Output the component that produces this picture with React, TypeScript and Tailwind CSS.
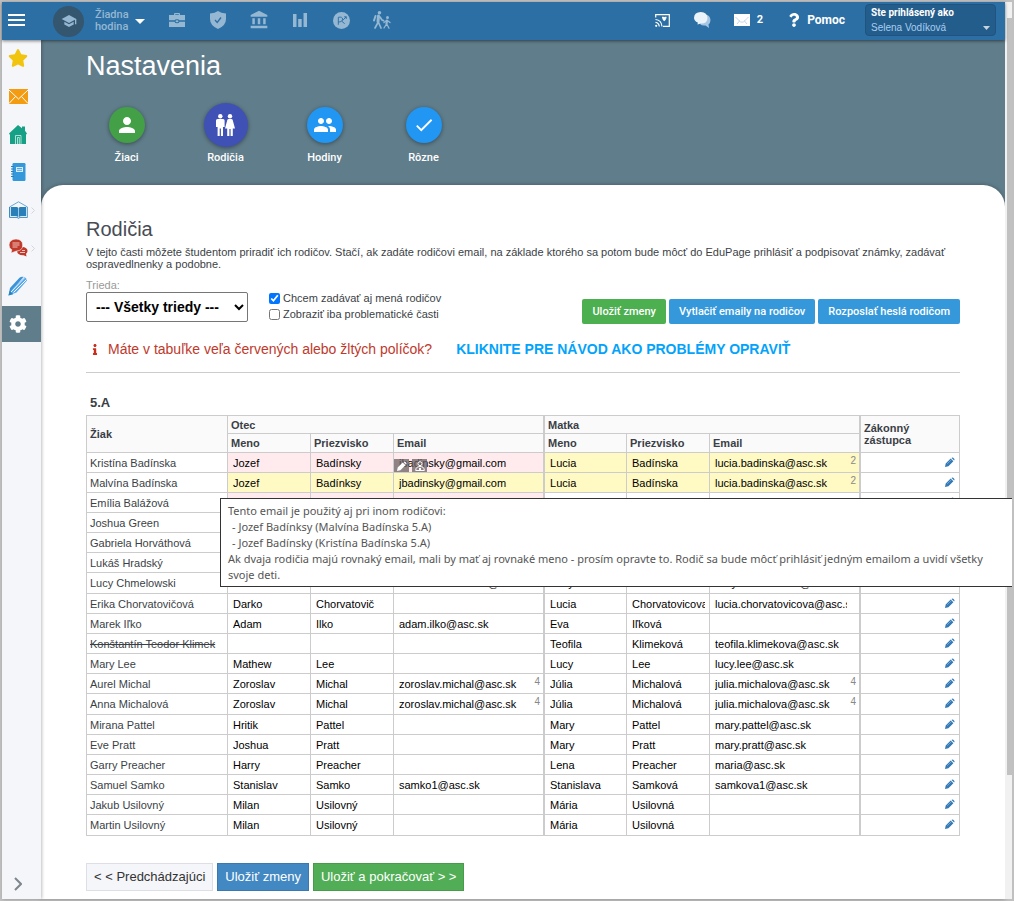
import React from "react";
import { MdPerson, MdPeople, MdCheck, MdSchool, MdAccountBalance } from "react-icons/md";
import { FaStar, FaQuestion, FaInfo, FaCog } from "react-icons/fa";

type Person = { first?: string; last?: string; email?: string; count?: number; tone?: "pink" | "yellow" };
type Row = { student: string; struck?: boolean; father: Person; mother: Person };

const rows: Row[] = [
  {
    student: "Kristína Badínska",
    father: { first: "Jozef", last: "Badínsky", email: "jbadinsky@gmail.com", tone: "pink" },
    mother: { first: "Lucia", last: "Badínska", email: "lucia.badinska@asc.sk", count: 2, tone: "yellow" },
  },
  {
    student: "Malvína Badínska",
    father: { first: "Jozef", last: "Badínksy", email: "jbadinsky@gmail.com", tone: "yellow" },
    mother: { first: "Lucia", last: "Badínska", email: "lucia.badinska@asc.sk", count: 2, tone: "yellow" },
  },
  { student: "Emília Balážová", father: { tone: "pink" }, mother: {} },
  { student: "Joshua Green", father: {}, mother: {} },
  { student: "Gabriela Horváthová", father: {}, mother: {} },
  { student: "Lukáš Hradský", father: {}, mother: {} },
  {
    student: "Lucy Chmelowski",
    father: { first: "Robert", last: "Chmelowski", email: "robert.chmelowski@asc.sk" },
    mother: { first: "Kelly", last: "Chmelowska", email: "kelly.chmelowska@asc.sk" },
  },
  {
    student: "Erika Chorvatovičová",
    father: { first: "Darko", last: "Chorvatovič" },
    mother: { first: "Lucia", last: "Chorvatovicova", email: "lucia.chorvatovicova@asc.sk" },
  },
  { student: "Marek Iľko", father: { first: "Adam", last: "Ilko", email: "adam.ilko@asc.sk" }, mother: { first: "Eva", last: "Iľková" } },
  { student: "Konštantín Teodor Klimek", struck: true, father: {}, mother: { first: "Teofila", last: "Klimeková", email: "teofila.klimekova@asc.sk" } },
  { student: "Mary Lee", father: { first: "Mathew", last: "Lee" }, mother: { first: "Lucy", last: "Lee", email: "lucy.lee@asc.sk" } },
  {
    student: "Aurel Michal",
    father: { first: "Zoroslav", last: "Michal", email: "zoroslav.michal@asc.sk", count: 4 },
    mother: { first: "Júlia", last: "Michalová", email: "julia.michalova@asc.sk", count: 4 },
  },
  {
    student: "Anna Michalová",
    father: { first: "Zoroslav", last: "Michal", email: "zoroslav.michal@asc.sk", count: 4 },
    mother: { first: "Júlia", last: "Michalová", email: "julia.michalova@asc.sk", count: 4 },
  },
  { student: "Mirana Pattel", father: { first: "Hritik", last: "Pattel" }, mother: { first: "Mary", last: "Pattel", email: "mary.pattel@asc.sk" } },
  { student: "Eve Pratt", father: { first: "Joshua", last: "Pratt" }, mother: { first: "Mary", last: "Pratt", email: "mary.pratt@asc.sk" } },
  { student: "Garry Preacher", father: { first: "Harry", last: "Preacher" }, mother: { first: "Lena", last: "Preacher", email: "maria@asc.sk" } },
  {
    student: "Samuel Samko",
    father: { first: "Stanislav", last: "Samko", email: "samko1@asc.sk" },
    mother: { first: "Stanislava", last: "Samková", email: "samkova1@asc.sk" },
  },
  { student: "Jakub Usilovný", father: { first: "Milan", last: "Usilovný" }, mother: { first: "Mária", last: "Usilovná" } },
  { student: "Martin Usilovný", father: { first: "Milan", last: "Usilovný" }, mother: { first: "Mária", last: "Usilovná" } },
];

const tones = { pink: "bg-[#ffebee]", yellow: "bg-[#fff9c4]", none: "bg-white" };

/* ---------- top bar icons ---------- */

function Briefcase() {
  return (
    <svg viewBox="0 0 16 14" className="h-[14px] w-4" fill="currentColor">
      <path d="M5 2V1q0-1 1-1h4q1 0 1 1v1h-1.2V1.2H6.200V2zM0 2h16v5.300h-5.500Q10 6.300 8 6.300T5.500 7.300H0zM0 8.700h5.500Q6 10.200 8 10.200T10.500 8.700H16V14H0z" />
      <ellipse cx="8" cy="8.200" rx="1.500" ry="1" />
    </svg>
  );
}

function ShieldCheck() {
  return (
    <svg viewBox="0 0 16 18" className="h-[18px] w-4">
      <path d="M8 0Q11 2.200 16 2.600V8q0 6.500-8 10Q0 14.500 0 8V2.600Q5 2.200 8 0z" fill="currentColor" />
      <path d="M5 9l2.200 2.500L11 6.500" fill="none" stroke="#2b6fa5" strokeWidth="1.300" />
    </svg>
  );
}

function Bars() {
  return (
    <svg viewBox="0 0 14 14" className="h-[14px] w-[14px]" fill="currentColor">
      <path d="M0 1h3.500v13H0zM5.200 6h3.500v8H5.200zM10.500 0H14v14h-3.500z" />
    </svg>
  );
}

function ChartBadge() {
  return (
    <svg viewBox="0 0 16 16" className="h-[17px] w-[17px]">
      <circle cx="8" cy="8" r="8" fill="currentColor" />
      <path d="M5 12V5q4-.8 4 1.700T5 9.500M8 8.500l3 2.500M9 8l3.500-3.500M10.500 4.500h2v2" fill="none" stroke="#2b6fa5" strokeWidth=".9" />
    </svg>
  );
}

function Walkers() {
  return (
    <svg viewBox="0 0 18 18" className="h-[18px] w-[18px]">
      <circle cx="6.500" cy="1.800" r="1.800" fill="currentColor" />
      <circle cx="14.500" cy="6.500" r="1.500" fill="currentColor" />
      <g fill="none" stroke="currentColor" strokeLinecap="round" strokeLinejoin="round">
        <path d="M5.500 5L5 10.500" strokeWidth="3" />
        <path d="M5.500 11.500L8 17M5 11.500L2 17M7 6l2 3 1.500 .6" strokeWidth="1.700" />
        <path d="M2.500 5L1 9.500" strokeWidth="2" />
        <path d="M14 9.500l-.5 3" strokeWidth="2.200" />
        <path d="M14 13.500l2 3.700M13.500 13l-2.500 4M13.500 9.500L11 11.500M15 10l2 1.500" strokeWidth="1.300" />
      </g>
    </svg>
  );
}

function CastScreen() {
  return (
    <svg viewBox="0 0 15 13" className="h-[13px] w-[15px]" fill="none" stroke="#fff">
      <path d="M.7 3.500V.7h13.600v11.600H8" strokeWidth="1.200" />
      <path d="M.5 5.500q6 .5 6.500 7M.5 8.300q3.400 .4 3.800 4.200" strokeWidth="1.200" />
      <circle cx="1.200" cy="11.800" r="1.100" fill="#fff" stroke="none" />
      <path d="M7 2.800h1.500q.7 .7 1.400 0h1.600v1.700h-.7v1.200L9.200 7.200 7.700 5.700V4.500H7z" fill="#fff" stroke="none" />
    </svg>
  );
}

function Bubbles() {
  return (
    <svg viewBox="0 0 17 16" className="h-4 w-[17px]">
      <path d="M9 3q7-1 7.500 5Q16.500 11 14.500 12.500L15 16l-3.500-2.500Q8 14 6 12z" fill="#a5c5e2" />
      <path d="M6.800 0Q13.500 .3 13.500 6T6.800 11.500L3.500 12.500 3.800 10.500Q0 9 0 5.700 .3 .3 6.800 0z" fill="#eaf2fa" />
    </svg>
  );
}

function MailWhite() {
  return (
    <svg viewBox="0 0 16 12" className="h-3 w-4">
      <path d="M0 0h16v12H0z" fill="#fff" />
      <path d="M1.500 3l4 4L3 10M14.500 3l-4 4 2.500 3M5 6.500q3 3.500 6 0" fill="none" stroke="#b4cde4" strokeWidth=".8" />
    </svg>
  );
}

function Couple() {
  return (
    <svg viewBox="0 0 19 22" className="h-[22px] w-[19px]" fill="currentColor">
      <circle cx="4.300" cy="2.200" r="2.200" />
      <circle cx="14" cy="2.200" r="2.200" />
      <path d="M1.500 5h5.600q1.500 0 1.500 1.500v6.500H7v9H4.900v-7.500H3.700V22H1.600v-9H0V6.500Q0 5 1.500 5z" />
      <path d="M12.600 5h2.800q1 0 1.300 1L19 14.500h-2.200V22h-2.200v-7h-1.200v7h-2.200v-7.500H9L11.300 6q.3-1 1.300-1z" />
    </svg>
  );
}

/* ---------- side bar icons ---------- */

function MailOrange() {
  return (
    <svg viewBox="0 0 19 15" className="h-[15px] w-[19px]">
      <path d="M0 0h19v15H0z" fill="#f39c12" />
      <path d="M0 1l9.500 9L19 1M0 14.500L6.500 7.500M19 14.500L12.500 7.500" fill="none" stroke="#fff" strokeWidth="1" />
    </svg>
  );
}

function House() {
  return (
    <svg viewBox="0 0 18 19" className="h-[19px] w-[18px]">
      <path d="M9 0l4 3.300V1.500h3v4.200L18 8.500l-.8 1H17V19H1V9.500H.5L0 8.500z" fill="#16a085" />
      <path d="M6.500 19v-8.500h5.500V19M8.500 19v-6.500h1.800V19" fill="none" stroke="#d3f0e9" strokeWidth=".8" />
    </svg>
  );
}

function Notebook() {
  return (
    <svg viewBox="0 0 15 18" className="h-[18px] w-[15px]">
      <rect x="1.500" width="13" height="18" rx="1.200" fill="#3498db" />
      <path d="M0 3.500h3M0 6h3M0 8.500h3M0 11h3M0 13.500h3" stroke="#2a80bd" strokeWidth="1" />
      <path d="M5 4h7v5H5z" fill="#d9ecf9" />
      <path d="M6 5.500h5M6 7.300h5" stroke="#3498db" strokeWidth=".8" />
    </svg>
  );
}

function OpenBook() {
  return (
    <svg viewBox="0 0 19 18" className="h-[18px] w-[19px]">
      <path d="M.5 6L9.500 .8 18.500 6v10.300" fill="none" stroke="#5b9fd0" strokeWidth=".9" />
      <path d="M1.800 6h6.200l1.200 .8v9.500Q8 15 6.500 15H1.800zM17.200 6H11l-1.200 .8v9.500Q11 15 12.500 15h4.700z" fill="#2980b9" />
      <path d="M.5 6v10.400h7.500l1.500 .9 1.500-.9h7.500" fill="none" stroke="#2980b9" strokeWidth=".9" />
    </svg>
  );
}

function RedBubbles() {
  return (
    <svg viewBox="0 0 19 18" className="h-[18px] w-[19px]">
      <path d="M14 8q4.500 .8 4.500 4 0 1.700-1.500 2.800l.5 2.700-3-1.300Q9 16.500 8 12.500z" fill="#c0392b" />
      <path d="M7 0q6.500 .3 6.700 6T7 12.200L2 14l.8-3.200Q0 9.300 0 6 .3 .3 7 0z" fill="#c0392b" stroke="#f5f6f9" strokeWidth=".6" />
      <path d="M3.500 4h7M3.500 6h7M3.500 8h5M11 13.500h5M13 11.500h3" stroke="#f5d5d1" strokeWidth=".9" />
    </svg>
  );
}

function Pens() {
  return (
    <svg viewBox="0 0 20 20" className="h-5 w-5">
      <path d="M.5 19.500L2 12 11.500 1.800Q13 .3 15.500 .8L5 13.500z" fill="#3a93d8" />
      <path d="M.5 19.500L5.500 11.800 16 1.300Q18.500 1.500 19 4.500L8.500 16.500z" fill="#5aaaea" />
      <path d="M3 16L16.500 1.800M5.500 16.500L18.500 3.500" stroke="#f5f6f9" strokeWidth="1" />
      <path d="M.5 19.500l1.200-4.500 3.500 3.200z" fill="#2a82c0" />
    </svg>
  );
}

function Chevron({ className }: { className: string }) {
  return (
    <svg viewBox="0 0 8 14" className={className} fill="none" stroke="currentColor" strokeWidth="2">
      <path d="M1 1l6 6-6 6" />
    </svg>
  );
}

/* ---------- table icons ---------- */

function Pencil() {
  return (
    <svg viewBox="0 0 10 10" className="h-[10px] w-[10px]" fill="currentColor">
      <path d="M0 10l.7-3.400L5.700 1.600 8.400 4.300 3.400 9.300zM6.500 .9q.8-.9 1.700-.1l1 1q.8 .9-.1 1.700z" />
      <path d="M2.200 6.800l4-4" stroke="#fff" strokeWidth=".5" opacity=".6" />
    </svg>
  );
}

function AccountLock() {
  return (
    <svg viewBox="0 0 10 10" className="h-[10px] w-[10px]" fill="none" stroke="currentColor">
      <circle cx="5" cy="2.700" r="2" />
      <path d="M.7 9.500q0-4 4.300-4t4.300 4z" />
      <path d="M4 7h2v2H4z" fill="currentColor" stroke="none" />
    </svg>
  );
}

const sideItems = [
  { name: "Obľúbené", icon: <FaStar className="h-5 w-5 text-[#f1c40f]" /> },
  { name: "Správy", icon: <MailOrange /> },
  { name: "Domov", icon: <House /> },
  { name: "Zápisník", icon: <Notebook /> },
  { name: "Vyučovanie", icon: <OpenBook />, more: true },
  { name: "Komunikácia", icon: <RedBubbles />, more: true },
  { name: "Písanie", icon: <Pens /> },
  { name: "Nastavenia", icon: <FaCog className="h-[18px] w-[18px] text-white" />, active: true },
];

const topIcons = [
  { name: "Agenda", icon: <Briefcase /> },
  { name: "Ochrana", icon: <ShieldCheck /> },
  { name: "Škola", icon: <MdAccountBalance className="h-5 w-5" /> },
  { name: "Štatistika", icon: <Bars /> },
  { name: "Výsledky", icon: <ChartBadge /> },
  { name: "Výlety", icon: <Walkers /> },
];

const tabs = [
  { name: "Žiaci", icon: <MdPerson className="h-6 w-6" />, look: "h-9 w-9 bg-[#43a047]" },
  { name: "Rodičia", icon: <Couple />, look: "h-11 w-11 bg-[#3f51b5]" },
  { name: "Hodiny", icon: <MdPeople className="h-6 w-6" />, look: "h-9 w-9 bg-[#2196f3]" },
  { name: "Rôzne", icon: <MdCheck className="h-[22px] w-[22px]" />, look: "h-9 w-9 bg-[#2196f3]" },
];

function TopBar() {
  return (
    <header className="relative z-10 flex h-[38px] shrink-0 items-center bg-[#2b6fa5] pb-[2px] font-['Roboto',sans-serif] text-white shadow-[0_1px_3px_rgba(0,0,0,0.5)]">
      <button aria-label="Menu" className="ml-[6px] flex w-[17px] flex-col gap-[3px]">
        <span className="h-[2px] w-full bg-white" />
        <span className="h-[2px] w-full bg-white" />
        <span className="h-[2px] w-full bg-white" />
      </button>
      <button className="mt-[2px] ml-7 flex items-center text-left text-[11px] leading-3 font-medium text-[#95b7d2]">
        <span className="flex h-[31px] w-[31px] items-center justify-center rounded-full bg-[#34566f]">
          <MdSchool className="h-4 w-4" />
        </span>
        <span className="ml-[11px] w-[40px]">Žiadna hodina</span>
        <svg viewBox="0 0 10 5" className="h-[5px] w-[10px]" fill="#fff">
          <path d="M0 0h10L5 5z" />
        </svg>
      </button>
      <nav className="ml-[22px] flex gap-[21px] text-[#95b7d2]">
        {topIcons.map((i) => (
          <button key={i.name} aria-label={i.name} className="flex h-5 w-5 items-center justify-center">
            {i.icon}
          </button>
        ))}
      </nav>
      <div className="ml-auto flex items-center text-[11px] font-bold">
        <button aria-label="Premietať"><CastScreen /></button>
        <button aria-label="Chat" className="ml-6"><Bubbles /></button>
        <button aria-label="Správy: 2" className="ml-[23px] flex items-center gap-[7px]">
          <MailWhite />
          <span>2</span>
        </button>
        <button className="ml-6 flex items-center gap-[6px]">
          <FaQuestion className="h-[14px] w-[14px]" />
          <span className="text-xs">Pomoc</span>
        </button>
        <button className="mr-[9px] ml-5 flex h-8 w-[131px] flex-col justify-center rounded-sm border border-[#1f5380] bg-[#235d8c] px-[5px] text-left text-[10px] leading-[15px]">
          <span>Ste prihlásený ako</span>
          <span className="flex w-full items-center justify-between font-['Liberation_Sans',sans-serif] font-normal text-[#a9cdf0]">
            Selena Vodíková
            <svg viewBox="0 0 7 4" className="h-1 w-[7px]" fill="#c9d3db">
              <path d="M0 0h7L3.500 4z" />
            </svg>
          </span>
        </button>
      </div>
    </header>
  );
}

function SideBar() {
  return (
    <aside className="relative z-[5] flex w-[39px] shrink-0 flex-col bg-[#f5f6f9] shadow-[1px_0_3px_rgba(0,0,0,0.25)]">
      <nav className="flex flex-col gap-[2px]">
        {sideItems.map((i) => (
          <a
            key={i.name}
            href="#"
            aria-label={i.name}
            className={i.active ? "relative flex h-9 items-center justify-center bg-[#607d8b] pr-[7px]" : "relative flex h-9 items-center justify-center pr-[7px]"}
          >
            {i.icon}
            {i.more && <Chevron className="absolute right-[6px] h-[7px] w-1 text-[#d5d6da]" />}
          </a>
        ))}
      </nav>
      <button aria-label="Rozbaliť" className="mt-auto mb-2 flex justify-center pr-[7px] text-[#7c868c]">
        <Chevron className="h-[14px] w-2" />
      </button>
    </aside>
  );
}

function NameCell({ value, tone, label }: { value?: string; tone: string; label: string }) {
  return (
    <td className={`border-r border-b border-[#ccc] p-0 ${tone}`}>
      <input aria-label={label} defaultValue={value} className="block h-[19px] w-full border-r-4 border-transparent bg-transparent pl-[5px] text-black outline-none" />
    </td>
  );
}

function EmailCell({ person, tone, label, tools }: { person: Person; tone: string; label: string; tools?: boolean }) {
  return (
    <td className={`relative border-r-2 border-b border-b-[#ccc] border-r-[#ccc] p-0 ${tone}`}>
      <input aria-label={label} defaultValue={person.email} className="block h-[19px] w-full border-r-[12px] border-transparent bg-transparent pl-[5px] text-black outline-none" />
      {person.count && <span className="absolute top-[2px] right-[3px] text-[10px] leading-3 text-[#888]">{person.count}</span>}
      {tools && (
        <span className="absolute bottom-0 left-0 flex gap-[3px] text-white">
          <button aria-label="Upraviť email" className="flex h-[13px] w-[15px] items-center justify-center bg-[#6b6063]/75">
            <Pencil />
          </button>
          <button aria-label="Konto" className="flex h-[13px] w-[15px] items-center justify-center bg-[#6b6063]/75">
            <AccountLock />
          </button>
        </span>
      )}
    </td>
  );
}

function ParentCells({ person, who, tools }: { person: Person; who: string; tools?: boolean }) {
  const tone = tones[person.tone ?? "none"];
  return (
    <>
      <NameCell value={person.first} tone={tone} label={`${who} – meno`} />
      <NameCell value={person.last} tone={tone} label={`${who} – priezvisko`} />
      <EmailCell person={person} tone={tone} label={`${who} – email`} tools={tools} />
    </>
  );
}

function ParentsTable() {
  const th = "border-r border-b border-[#ccc] px-[3px] py-0";
  const thEdge = "border-r-2 border-b border-[#ccc] px-[3px] py-0";
  return (
    <table className="w-full table-fixed border-separate border-spacing-0 border-t border-l border-[#ccc] text-[11px] leading-3 text-[#3b3f46]">
      <colgroup>
        <col className="w-[141px]" />
        <col className="w-[83px]" />
        <col className="w-[83px]" />
        <col className="w-[151px]" />
        <col className="w-[82px]" />
        <col className="w-[83px]" />
        <col className="w-[151px]" />
        <col />
      </colgroup>
      <thead className="bg-[#fafafa] text-left">
        <tr className="h-[18px]">
          <th rowSpan={2} className={th}>Žiak</th>
          <th colSpan={3} className={thEdge}>Otec</th>
          <th colSpan={3} className={thEdge}>Matka</th>
          <th rowSpan={2} className={th}>Zákonný<br />zástupca</th>
        </tr>
        <tr className="h-[19px]">
          <th className={th}>Meno</th>
          <th className={th}>Priezvisko</th>
          <th className={thEdge}>Email</th>
          <th className={th}>Meno</th>
          <th className={th}>Priezvisko</th>
          <th className={thEdge}>Email</th>
        </tr>
      </thead>
      <tbody>
        {rows.map((r, i) => (
          <tr key={r.student} className="h-5 align-top nth-[6n+7]:h-[21px]">
            <td className="border-r border-b border-[#ccc] px-[3px] pt-1 pb-0 whitespace-nowrap">
              <span className={r.struck ? "line-through" : ""}>{r.student}</span>
            </td>
            <ParentCells person={r.father} who={`${r.student}, otec`} tools={i === 0} />
            <ParentCells person={r.mother} who={`${r.student}, matka`} />
            <td className="border-r border-b border-[#ccc] pt-1 pr-1 pb-0 pl-0">
              <button aria-label={`Upraviť zástupcu – ${r.student}`} className="ml-auto block text-[#337ab7]">
                <Pencil />
              </button>
            </td>
          </tr>
        ))}
      </tbody>
    </table>
  );
}

function Panel() {
  const action = "h-[25px] rounded-xs px-[10px] pt-px font-['Roboto',sans-serif] text-[11px] font-medium text-white";
  return (
    <section className="flex-1 rounded-t-[22px] bg-white px-[45px] pt-8 text-[#3b3f46] shadow-[0_0_4px_rgba(0,0,0,0.3)]">
      <h2 className="text-xl leading-6 text-[#474c55]">Rodičia</h2>
      <p className="mt-[5px] text-[11px] leading-3">
        V tejto časti môžete študentom priradiť ich rodičov. Stačí, ak zadáte rodičovi email, na základe ktorého sa potom bude môcť do EduPage prihlásiť a podpisovať známky, zadávať ospravedlnenky a podobne.
      </p>
      <div className="mt-[9px] flex items-start">
        <div className="flex flex-col gap-px">
          <label htmlFor="trieda" className="text-[11px] leading-3 text-[#999]">Trieda:</label>
          <select id="trieda" className="h-[30px] w-[162px] rounded-xs border border-[#767676] bg-white pl-[5px] text-sm font-bold text-black">
            <option>--- Všetky triedy ---</option>
          </select>
        </div>
        <div className="mt-[11px] ml-[21px] flex flex-col text-[11px] leading-4">
          <label className="flex items-center gap-[3px]">
            <input type="checkbox" defaultChecked className="m-0 h-[11px] w-[11px] accent-[#0075ff]" />
            Chcem zadávať aj mená rodičov
          </label>
          <label className="flex items-center gap-[3px]">
            <input type="checkbox" className="m-0 h-[11px] w-[11px]" />
            Zobraziť iba problematické časti
          </label>
        </div>
        <div className="mt-5 ml-auto flex gap-[3px]">
          <button className={`${action} bg-[#4caf50]`}>Uložiť zmeny</button>
          <button className={`${action} bg-[#3498db]`}>Vytlačiť emaily na rodičov</button>
          <button className={`${action} bg-[#3498db]`}>Rozposlať heslá rodičom</button>
        </div>
      </div>
      <div className="mt-[15px] flex items-center text-sm leading-5">
        <FaInfo className="ml-[3px] h-[11px] w-3 text-[#c62d1f]" />
        <span className="ml-[7px] text-[#c0392b]">Máte v tabuľke veľa červených alebo žltých políčok?</span>
        <a href="#" className="ml-6 font-bold text-[#03a3fb]">KLIKNITE PRE NÁVOD AKO PROBLÉMY OPRAVIŤ</a>
      </div>
      <hr className="mt-[13px] border-[#ccc]" />
      <h3 className="mt-[22px] pl-1 text-[13px] leading-4 font-bold">5.A</h3>
      <div className="relative mt-1">
        <ParentsTable />
        <div
          role="tooltip"
          className="absolute top-[83px] right-[-52px] left-[134px] z-20 border border-r-0 border-[#333] bg-white pt-1 pr-0 pb-[3px] pl-[7px] font-['Noto_Sans','Open_Sans',sans-serif] text-[11px] leading-4 text-[#555]"
        >
          <p>Tento email je použitý aj pri inom rodičovi:</p>
          <p className="pl-1">- Jozef Badínksy (Malvína Badínska 5.A)</p>
          <p className="pl-1">- Jozef Badínsky (Kristína Badínska 5.A)</p>
          <p>Ak dvaja rodičia majú rovnaký email, mali by mať aj rovnaké meno - prosím opravte to. Rodič sa bude môcť prihlásiť jedným emailom a uvidí všetky svoje deti.</p>
        </div>
      </div>
      <div className="mt-[27px] flex gap-1 pb-2 text-[13px]">
        <button className="h-7 border border-[#dcdfe6] bg-[#f5f6fa] px-[7px] text-[#333]">&lt; &lt; Predchádzajúci</button>
        <button className="h-7 border border-[#3a78b0] bg-[#4288c3] px-[7px] text-white">Uložiť zmeny</button>
        <button className="h-7 border border-[#479c4b] bg-[#52ae56] px-[7px] text-white">Uložiť a pokračovať &gt; &gt;</button>
      </div>
    </section>
  );
}

export default function App() {
  return (
    <div className="flex min-h-screen border-2 border-[#c0c0c0] bg-white font-['Liberation_Sans',Arial,sans-serif]">
      <div className="flex min-w-0 flex-1 flex-col">
        <TopBar />
        <div className="flex flex-1">
          <SideBar />
          <main className="flex min-w-0 flex-1 flex-col bg-[#607d8b]">
            <div className="flex h-[145px] flex-col">
              <h1 className="mt-[10px] pl-[45px] text-[27px] leading-8 text-white">Nastavenia</h1>
              <nav className="mt-[21px] flex pl-9 font-['Roboto',sans-serif]">
                {tabs.map((t) => (
                  <a key={t.name} href="#" className="flex w-[99px] flex-col items-center text-[11px] leading-4 font-medium text-white">
                    <span className="flex h-11 items-center">
                      <span className={`flex items-center justify-center rounded-full shadow-[0_1px_4px_rgba(0,0,0,0.4)] ${t.look}`}>{t.icon}</span>
                    </span>
                    <span className="mt-[3px]">{t.name}</span>
                  </a>
                ))}
              </nav>
            </div>
            <Panel />
          </main>
        </div>
      </div>
      <div aria-hidden="true" className="flex w-[7px] shrink-0 flex-col bg-[#f1f1f1] pt-4 pl-[2px]">
        <div className="h-[757px] bg-[#c1c1c1]" />
      </div>
    </div>
  );
}
